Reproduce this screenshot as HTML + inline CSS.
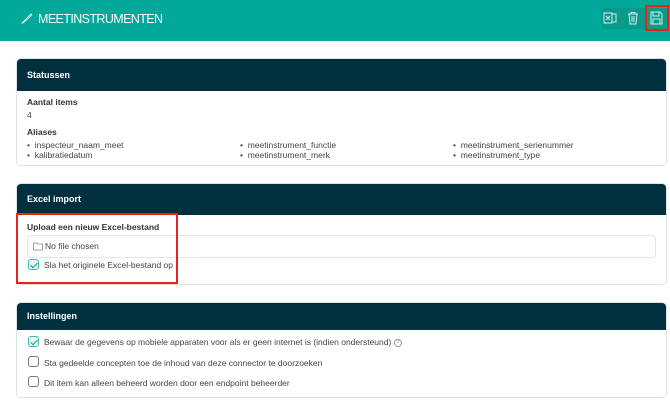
<!DOCTYPE html>
<html><head><meta charset="utf-8"><style>
*{box-sizing:border-box;margin:0;padding:0}
body{width:670px;height:400px;overflow:hidden;background:#fff;font-family:"Liberation Sans",sans-serif;color:#333;position:relative}
.top{position:absolute;left:0;top:0;width:670px;height:41px;background:#00a99a}
.title{position:absolute;left:38px;top:12px;color:#fff;font-size:12.5px;letter-spacing:-0.6px}
.grp{position:absolute;left:601px;top:8px;width:66px;height:21px;background:#0a9a8c;border-radius:3px}
.card{position:absolute;left:16px;width:651px;border:1px solid #dde3e5;border-radius:5px;overflow:hidden;background:#fff}
.hd{background:#002f3d;color:#fff;font-size:9px;font-weight:bold;padding-left:10px}
.t{position:absolute;font-size:8.5px;color:#444;white-space:nowrap}
.b{font-weight:bold;color:#333}
.cb{position:absolute;width:11px;height:11px;border:1px solid #777;border-radius:3px;background:#fff}
.cb.on{border-color:#3bbdb0;background:#eaf8f6}
.cb.on:after{content:"";position:absolute;left:3px;top:0.5px;width:3px;height:6px;border:solid #1a9a8c;border-width:0 1.5px 1.5px 0;transform:rotate(45deg)}
</style></head><body>
<div class="top"></div>
<svg style="position:absolute;left:21px;top:12px" width="12" height="12" viewBox="0 0 12 12"><path d="M1 11 L10 2 L11 3 L2 11 Z" fill="none" stroke="#fff" stroke-width="0.8"/></svg>
<div class="title">MEETINSTRUMENTEN</div>
<div class="grp"></div>
<svg style="position:absolute;left:603px;top:11px" width="14" height="14" viewBox="0 0 14 14" fill="none" stroke="#cfeeea" stroke-width="1"><rect x="1" y="2" width="8" height="10"/><rect x="9" y="3" width="4" height="8"/><path d="M3 5 L7 9 M7 5 L3 9"/></svg>
<svg style="position:absolute;left:627px;top:11px" width="12" height="14" viewBox="0 0 12 14" fill="none" stroke="#cfeeea" stroke-width="1"><path d="M1 3 H11 M4 3 V1.5 H8 V3 M2 3 L3 13 H9 L10 3 M5 5 V11 M7 5 V11"/></svg>
<svg style="position:absolute;left:650px;top:11px" width="13" height="14" viewBox="0 0 13 14" fill="none" stroke="#cfeeea" stroke-width="1"><path d="M1 1 H10 L12 3 V13 H1 Z M3 1 V5 H9 V1 M3 13 V8 H10 V13"/></svg>
<div style="position:absolute;left:645px;top:5px;width:24px;height:26px;border:2px solid #e8231a"></div>

<div class="card" style="top:58px;height:108px"><div class="hd" style="height:32px;line-height:32px">Statussen</div></div>
<div class="t b" style="left:27px;top:97px">Aantal items</div>
<div class="t" style="left:27px;top:110px">4</div>
<div class="t b" style="left:27px;top:127px">Aliases</div>
<div class="t" style="left:27px;top:140px">•&nbsp; inspecteur_naam_meet</div>
<div class="t" style="left:27px;top:150px">•&nbsp; kalibratiedatum</div>
<div class="t" style="left:240px;top:140px">•&nbsp; meetinstrument_functie</div>
<div class="t" style="left:240px;top:150px">•&nbsp; meetinstrument_merk</div>
<div class="t" style="left:453px;top:140px">•&nbsp; meetinstrument_serienummer</div>
<div class="t" style="left:453px;top:150px">•&nbsp; meetinstrument_type</div>

<div class="card" style="top:183px;height:102px"><div class="hd" style="height:31px;line-height:31px">Excel import</div></div>
<div class="t b" style="left:27px;top:222px">Upload een nieuw Excel-bestand</div>
<div style="position:absolute;left:27px;top:235px;width:629px;height:23px;border:1px solid #e2e6e8;border-radius:4px"></div>
<svg style="position:absolute;left:33px;top:241px" width="10" height="10" viewBox="0 0 10 10" fill="none" stroke="#888" stroke-width="0.8"><path d="M0.5 2 H4 L5 3 H9.5 V9 H0.5 Z"/></svg>
<div class="t" style="left:45px;top:241px">No file chosen</div>
<div class="cb on" style="left:28px;top:259px"></div>
<div class="t" style="left:44px;top:260px">Sla het originele Excel-bestand op</div>
<div style="position:absolute;left:16px;top:213px;width:162px;height:71px;border:2px solid #e8231a"></div>

<div class="card" style="top:302px;height:96px"><div class="hd" style="height:27px;line-height:27px">Instellingen</div></div>
<div class="cb on" style="left:28px;top:336px"></div>
<div class="t" style="left:44px;top:337px">Bewaar de gegevens op mobiele apparaten voor als er geen internet is (indien ondersteund) <span style="display:inline-block;width:8px;height:8px;border:0.8px solid #999;border-radius:50%;font-size:6px;line-height:7px;text-align:center;color:#999;vertical-align:1px">?</span></div>
<div class="cb" style="left:28px;top:356px"></div>
<div class="t" style="left:44px;top:358px">Sta gedeelde concepten toe de inhoud van deze connector te doorzoeken</div>
<div class="cb" style="left:28px;top:376px"></div>
<div class="t" style="left:44px;top:378px">Dit item kan alleen beheerd worden door een endpoint beheerder</div>
</body></html>
